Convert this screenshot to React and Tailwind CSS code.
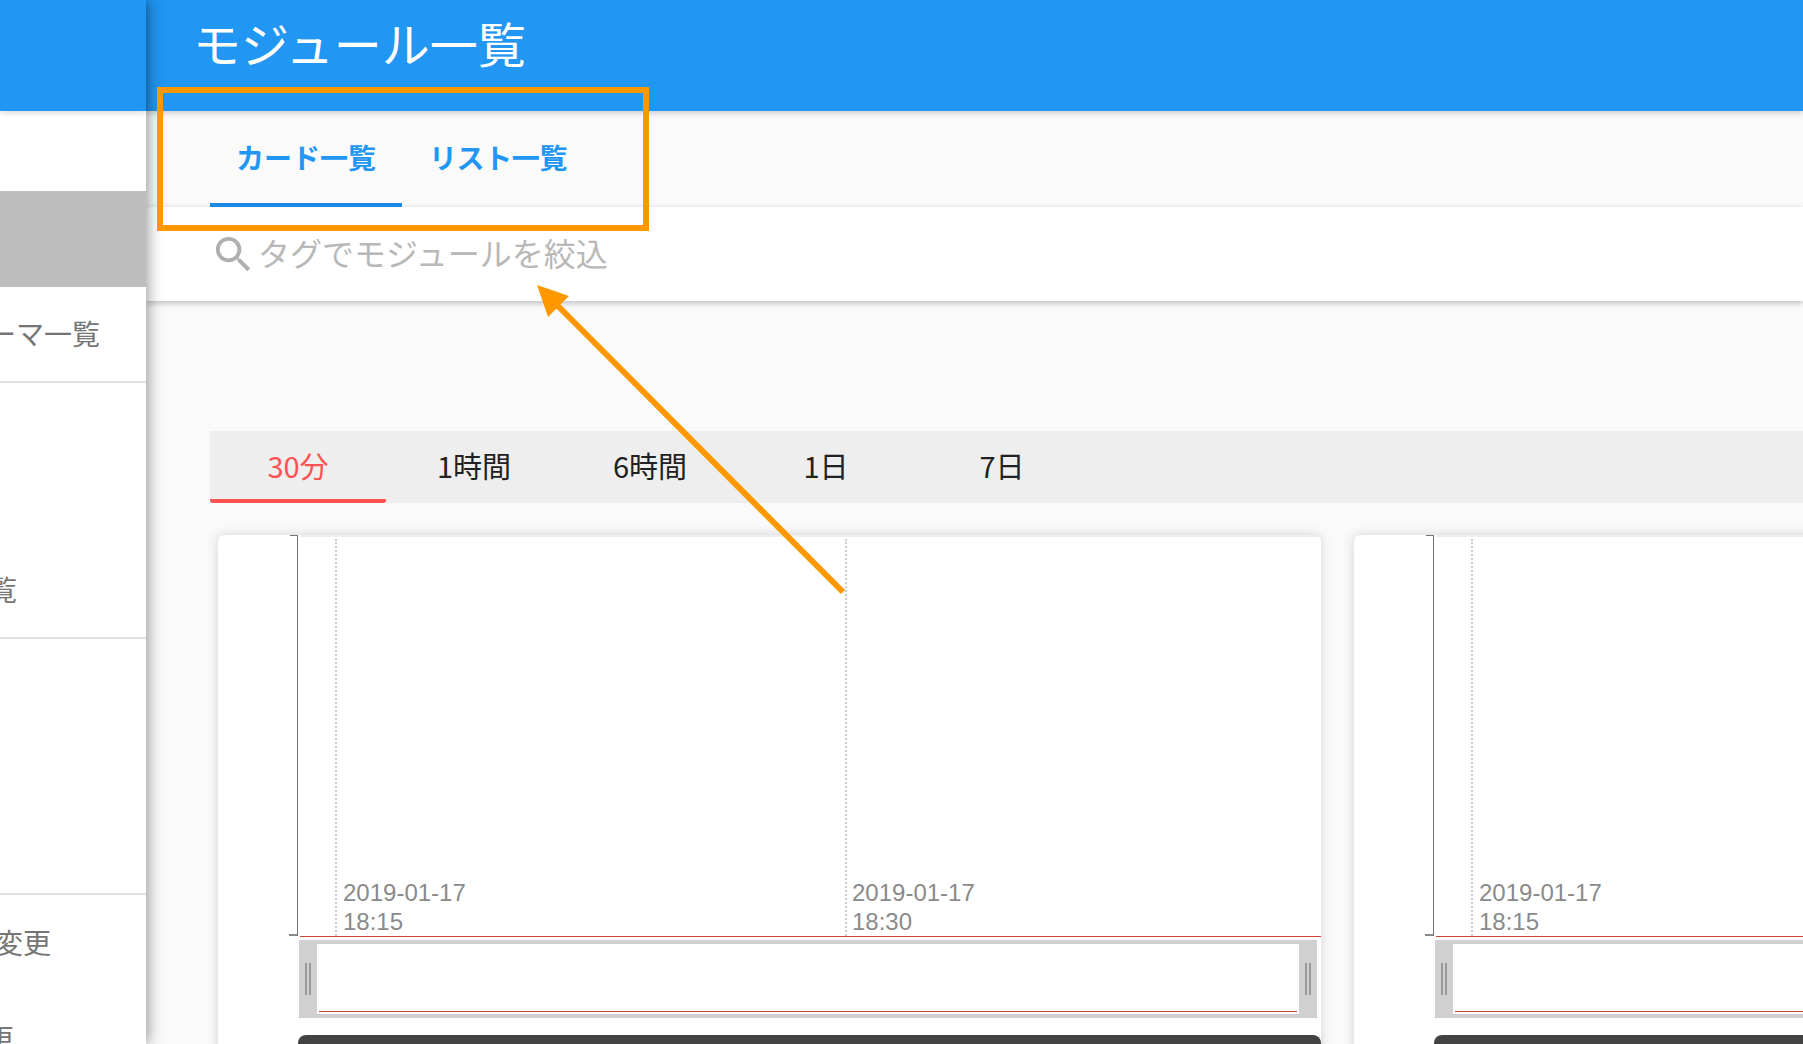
import React from 'react';
import { MdSearch } from 'react-icons/md';

const JP = 'font-["Noto_Sans_CJK_JP","Noto_Sans",sans-serif]';
const TIME_TABS = ['30分', '1時間', '6時間', '1日', '7日'];

function SideRow({ label, right, last }) {
  return (
    <div
      className={`flex h-[96px] items-center justify-end overflow-hidden whitespace-nowrap pb-[2px] text-[28px] text-[#757575] ${last ? '' : 'border-b-2 border-[#e0e0e0]'}`}
      style={{ paddingRight: right }}
    >
      <span className="shrink-0">{label}</span>
    </div>
  );
}

function Handle() {
  return (
    <div className="flex w-[18px] shrink-0 items-center justify-center gap-[2px]">
      <div className="h-[32px] w-[2px] bg-[#999999]" />
      <div className="h-[32px] w-[2px] bg-[#999999]" />
    </div>
  );
}

function TimeLabel({ left, time }) {
  return (
    <div className="absolute bottom-0 font-['Liberation_Sans',sans-serif] text-[24px] leading-[29px] text-[#8a8a8a]" style={{ left }}>
      <div>2019-01-17</div>
      <div>{time}</div>
    </div>
  );
}

function ChartCard() {
  return (
    <div className="w-[1103px] shrink-0 rounded-t-[6px] bg-white shadow-[0_0_12px_rgba(0,0,0,0.16)]">
      <div className="flex h-[402px]">
        {/* y axis */}
        <div className="relative h-[401px] w-[80px] shrink-0 border-r border-[#757575]">
          <div className="absolute right-0 top-0 h-px w-[7px] bg-[#757575]" />
          <div className="absolute bottom-0 right-0 h-[2px] w-[8px] bg-[#8a8a8a]" />
        </div>
        <div className="relative ml-[2px] flex-1 border-t-2 border-b border-t-[#eeeeee] border-b-[#d0452f]">
          <div className="absolute bottom-0 left-[35px] top-[2px] border-l-2 border-dotted border-[#cccccc]" />
          <div className="absolute bottom-0 left-[545px] top-[2px] border-l-2 border-dotted border-[#cccccc]" />
          <TimeLabel left={43} time="18:15" />
          <TimeLabel left={552} time="18:30" />
        </div>
      </div>
      {/* brush */}
      <div className="ml-[81px] mt-[3px] flex h-[78px] w-[1018px] bg-[#d0d0d0]">
        <Handle />
        <div className="my-[4px] flex flex-1 items-end bg-white px-[2px] pb-[2px]">
          <div className="h-px w-full bg-[#d0452f]" />
        </div>
        <Handle />
      </div>
      <div className="ml-[80px] mt-[17px] h-[60px] rounded-t-[8px] bg-[#424242]" />
    </div>
  );
}

export default function App() {
  return (
    <div className={`relative flex h-screen w-full overflow-hidden bg-[#fafafa] ${JP}`}>
      <aside className="relative z-10 w-[146px] shrink-0 bg-white shadow-[2px_0_14px_rgba(0,0,0,0.4)]">
        <div className="h-[111px] bg-[#2196f3] shadow-[0_2px_6px_rgba(0,0,0,0.15)]" />
        <div className="mt-[80px] h-[96px] bg-[#bdbdbd]" />
        <SideRow label="テーマ一覧" right={46} />
        <div className="h-[160px]" />
        <SideRow label="モジュール一覧" right={129} />
        <div className="h-[256px] border-b-2 border-[#e0e0e0]" />
        <SideRow label="パスワード変更" right={95} last />
        <SideRow label="設定変更" right={132} last />
      </aside>

      <main className="min-w-0 flex-1">
        <header className="relative z-[5] flex h-[111px] items-start bg-[#2196f3] pl-[47px] pt-[8px] shadow-[0_2px_6px_rgba(0,0,0,0.2)]">
          <h1 className="text-[48px] font-normal leading-[68px] text-white">モジュール一覧</h1>
        </header>

        <div className="flex h-[96px] pl-[64px] text-[28px] font-bold text-[#2196f3]">
          <div className="flex h-full w-[192px] items-center justify-center border-b-4 border-[#1e88e5]">カード一覧</div>
          <div className="flex h-full w-[192px] items-center justify-center pb-[4px] tracking-[-0.4px]">リスト一覧</div>
        </div>

        <div className="flex h-[94px] items-center rounded-tl-[4px] bg-white pl-[64px] shadow-[0_2px_6px_rgba(0,0,0,0.25)]">
          <MdSearch className="shrink-0 text-[#b0b0b0]" size={47} />
          <span className="ml-[1px] pb-[4px] text-[32px] text-[#b8b8b8]">タグでモジュールを絞込</span>
        </div>

        <div className="ml-[64px] mt-[130px] flex h-[72px] bg-[#eeeeee] text-[29px] text-[#212121]">
          {TIME_TABS.map((t, i) => (
            <div
              key={t}
              className={`flex h-full w-[176px] items-center justify-center ${i === 0 ? 'rounded-b-[3px] border-b-4 border-[#ff5252] text-[#ff5252]' : 'pb-[4px]'}`}
            >
              <span className="translate-y-[1px]">{t}</span>
            </div>
          ))}
        </div>

        <div className="ml-[72px] mt-[32px] flex gap-[33px]">
          <ChartCard />
          <ChartCard />
        </div>
      </main>

      {/* annotation drawn over the page */}
      <svg className="pointer-events-none absolute left-0 top-0 z-20" width="1803" height="1044" viewBox="0 0 1803 1044">
        <rect x="160" y="90" width="486" height="138" fill="none" stroke="#ff9800" strokeWidth="6" />
        <line x1="843" y1="592" x2="556" y2="304" stroke="#ff9800" strokeWidth="6" />
        <polygon points="537,285 569,296 548,317" fill="#ff9800" />
      </svg>
    </div>
  );
}
